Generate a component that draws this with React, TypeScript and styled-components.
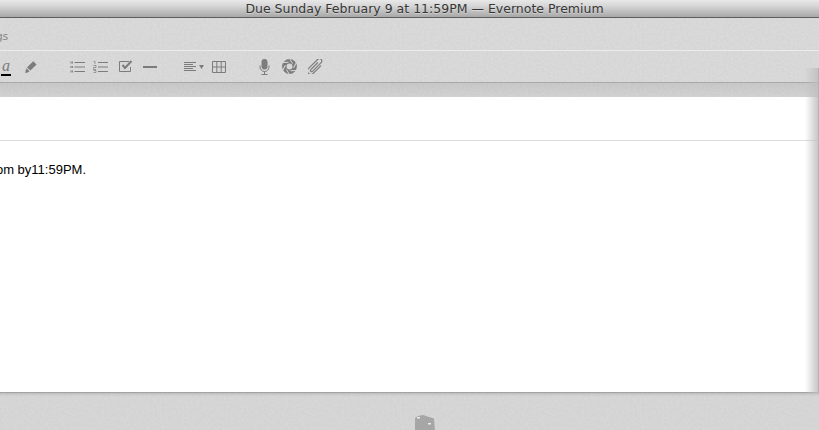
import React from "react";
import styled, { createGlobalStyle } from "styled-components";

const noise = `url("data:image/svg+xml,%3Csvg xmlns='http://www.w3.org/2000/svg' width='240' height='240'%3E%3Cfilter id='n'%3E%3CfeTurbulence type='fractalNoise' baseFrequency='0.45' numOctaves='3' seed='4'/%3E%3CfeColorMatrix values='0 0 0 0 0.55 0 0 0 0 0.55 0 0 0 0 0.55 0.55 0 0 0 -0.17'/%3E%3C/filter%3E%3Crect width='240' height='240' filter='url(%23n)'/%3E%3C/svg%3E")`;

const Global = createGlobalStyle`
  html, body { margin: 0; padding: 0; width: 819px; height: 430px; overflow: hidden; background: #d9d9d9; }
`;

const Window = styled.div`
  position: relative;
  width: 819px;
  height: 430px;
  display: flex;
  flex-direction: column;
  overflow: hidden;
  font-family: "Liberation Sans", Arial, sans-serif;
`;

const TitleBar = styled.div`
  height: 17px;
  flex: none;
  border-bottom: 1px solid #5e5e5e;
  background: linear-gradient(#e8e8e8, #d6d6d6 35%, #a8a8a8);
  display: flex;
  justify-content: center;
  align-items: center;
  padding-left: 30px;
`;

const Title = styled.div`
  font-family: "DejaVu Sans", sans-serif;
  font-size: 12.5px;
  line-height: 14px;
  color: #363636;
  white-space: nowrap;
  text-shadow: 0 1px 0 rgba(255, 255, 255, 0.35);
`;

const TagRow = styled.div`
  height: 33px;
  flex: none;
  box-sizing: border-box;
  background: #dadada ${noise};
  border-bottom: 1px solid #ececec;
  display: flex;
  align-items: center;
`;

const TagLabel = styled.span`
  font-family: "DejaVu Sans", sans-serif;
  font-size: 11px;
  color: #878787;
  margin-left: -16px;
  margin-top: 5px;
`;

const Toolbar = styled.div`
  height: 32px;
  flex: none;
  box-sizing: border-box;
  background: #dadada ${noise};
  border-bottom: 1px solid #a9a9a9;
  display: flex;
  align-items: center;
  padding-left: 1px;
`;

const Tool = styled.div<{ $after: number }>`
  display: flex;
  flex: none;
  margin-right: ${(p) => p.$after}px;
`;

const LetterA = styled.span`
  display: block;
  width: 10px;
  height: 17px;
  margin-top: 1px;
  font-family: "Liberation Serif", serif;
  font-style: italic;
  font-size: 16px;
  line-height: 14px;
  text-align: center;
  color: #7c7c7c;
  border-bottom: 2px solid #000;
  box-sizing: border-box;
`;

const Icon = styled.svg`
  display: block;
  flex: none;
  color: #7c7c7c;
`;

const Strip = styled.div`
  height: 14px;
  flex: none;
  background: linear-gradient(rgba(0, 0, 0, 0.08), rgba(0, 0, 0, 0.03)), #dadada ${noise};
`;

const Sheet = styled.div`
  height: 296px;
  flex: none;
  background: #fff;
  border-bottom: 1px solid #a3a3a3;
  box-sizing: border-box;
  display: flex;
  flex-direction: column;
`;

const Header = styled.div`
  height: 44px;
  flex: none;
  box-sizing: border-box;
  border-bottom: 1px solid #dcdcdc;
`;

const Body = styled.div`
  padding-top: 21px;
  margin-left: -200px;
  font-size: 13px;
  line-height: 16px;
  color: #000;
  white-space: nowrap;
`;

const BodyText = styled.p`
  margin: 0;
  width: 286px;
  text-align: right;
`;

const Footer = styled.div`
  flex: 1;
  background: #d7d7d7 ${noise};
  box-shadow: inset 0 3px 3px -2px rgba(0, 0, 0, 0.15);
  padding: 22px 0 0 415px;
  overflow: hidden;
`;

const EdgeShadow = styled.div`
  position: absolute;
  right: 0;
  top: 68px;
  width: 14px;
  height: 325px;
  background: linear-gradient(90deg, rgba(185, 185, 185, 0), rgba(190, 190, 190, 0.85) 92%, #b4b4b4 93%);
  pointer-events: none;
`;

const apertureSlits = [0, 60, 120, 180, 240, 300];

export default function App() {
  return (
    <Window>
      <Global />
      <TitleBar>
        <Title>Due Sunday February 9 at 11:59PM — Evernote Premium</Title>
      </TitleBar>
      <TagRow>
        <TagLabel>Tags</TagLabel>
      </TagRow>
      <Toolbar>
        <Tool $after={13}>
          <LetterA>a</LetterA>
        </Tool>
        <Tool $after={32}>
          <Icon width="14" height="14" viewBox="0 0 14 14" fill="currentColor">
            <path d="M9.2 1.2 12.6 4.4 6.4 10.6 3 7.4Z" />
            <path d="M2.4 8.2 5.6 11.3 3.6 12.4 1.2 12.9 1.7 10.4Z" />
          </Icon>
        </Tool>
        <Tool $after={8}>
          <Icon width="15" height="12" viewBox="0 0 15 12" stroke="currentColor" fill="none">
            <path d="M4.5 1.5H15M4.5 6H15M4.5 10.5H15" />
            <path d="M.5 1.5H3M.5 6H3M.5 10.5H3" strokeWidth="2" strokeDasharray="1 .4" />
          </Icon>
        </Tool>
        <Tool $after={11}>
          <Icon width="15" height="12" viewBox="0 0 15 12" stroke="currentColor" fill="none">
            <path d="M5 1.5H15M5 6H15M5 10.5H15" />
            <path d="M.6.5H2V3M.5 4.5H3V6.5H.5V8.5H3M.5 9.5H3V11.5H.5" strokeWidth=".7" />
          </Icon>
        </Tool>
        <Tool $after={10}>
          <Icon width="14" height="13" viewBox="0 0 14 13" stroke="currentColor" fill="none">
            <path d="M11.5 7V11.5H.5V1.5H10" />
            <path d="M3.5 5 6 8 12.5 1" strokeWidth="2" />
          </Icon>
        </Tool>
        <Tool $after={27}>
          <Icon width="14" height="12" viewBox="0 0 14 12" fill="currentColor">
            <rect x="0" y="5" width="14" height="2" />
          </Icon>
        </Tool>
        <Tool $after={3}>
          <Icon width="12" height="12" viewBox="0 0 12 12" stroke="currentColor" fill="none">
            <path d="M0 1.5H12M0 3.5H9M0 5.5H12M0 7.5H9M0 9.5H12" />
          </Icon>
        </Tool>
        <Tool $after={8}>
          <Icon width="5" height="4" viewBox="0 0 5 4" fill="currentColor">
            <path d="M0 0H5L2.5 4Z" />
          </Icon>
        </Tool>
        <Tool $after={33}>
          <Icon width="14" height="12" viewBox="0 0 14 12" stroke="currentColor" fill="none">
            <path d="M.5.5H13.5V11.5H.5ZM.5 6H13.5M4.8.5V11.5M9.2.5V11.5" />
          </Icon>
        </Tool>
        <Tool $after={12}>
          <Icon width="11" height="16" viewBox="0 0 11 16" fill="none" stroke="currentColor">
            <rect x="2.5" y="0" width="6" height="10.5" rx="3" fill="currentColor" stroke="none" />
            <path d="M1 6.5V8A4.5 4.5 0 0 0 10 8V6.5M5.5 12.5V15M2.5 15.5H8.5" />
          </Icon>
        </Tool>
        <Tool $after={11}>
          <Icon width="15" height="15" viewBox="0 0 15 15" fill="none">
            <circle cx="7.5" cy="7.5" r="5.2" stroke="currentColor" strokeWidth="4.4" />
            {apertureSlits.map((a) => (
              <path
                key={a}
                d="M7.8 0 L10.6 4.6"
                stroke="#dadada"
                strokeWidth="1"
                transform={`rotate(${a} 7.5 7.5)`}
              />
            ))}
          </Icon>
        </Tool>
        <Tool $after={0}>
          <Icon width="15" height="15" viewBox="0 0 15 15" fill="none" stroke="currentColor" strokeWidth="1.2">
            <path
              d="M6.4 3V13A1.2 1.2 0 0 0 8.8 13V.8A2.4 2.4 0 0 0 4 .8V14A3.4 3.4 0 0 0 10.8 14V3"
              transform="rotate(45 7.5 7.5)"
            />
          </Icon>
        </Tool>
      </Toolbar>
      <Strip />
      <Sheet>
        <Header />
        <Body>
          <BodyText>from by11:59PM.</BodyText>
        </Body>
      </Sheet>
      <Footer>
        <Icon width="20" height="16" viewBox="0 0 20 16" fill="#a6a6a6">
          <path d="M0 3 3 1 8 0 11 1 14 2 19 3.5 20 16H0Z" />
          <rect x="2" y="2" width="3" height="1.5" fill="#ececec" />
          <rect x="13" y="8" width="3" height="1.5" fill="#ececec" />
        </Icon>
      </Footer>
      <EdgeShadow />
    </Window>
  );
}
